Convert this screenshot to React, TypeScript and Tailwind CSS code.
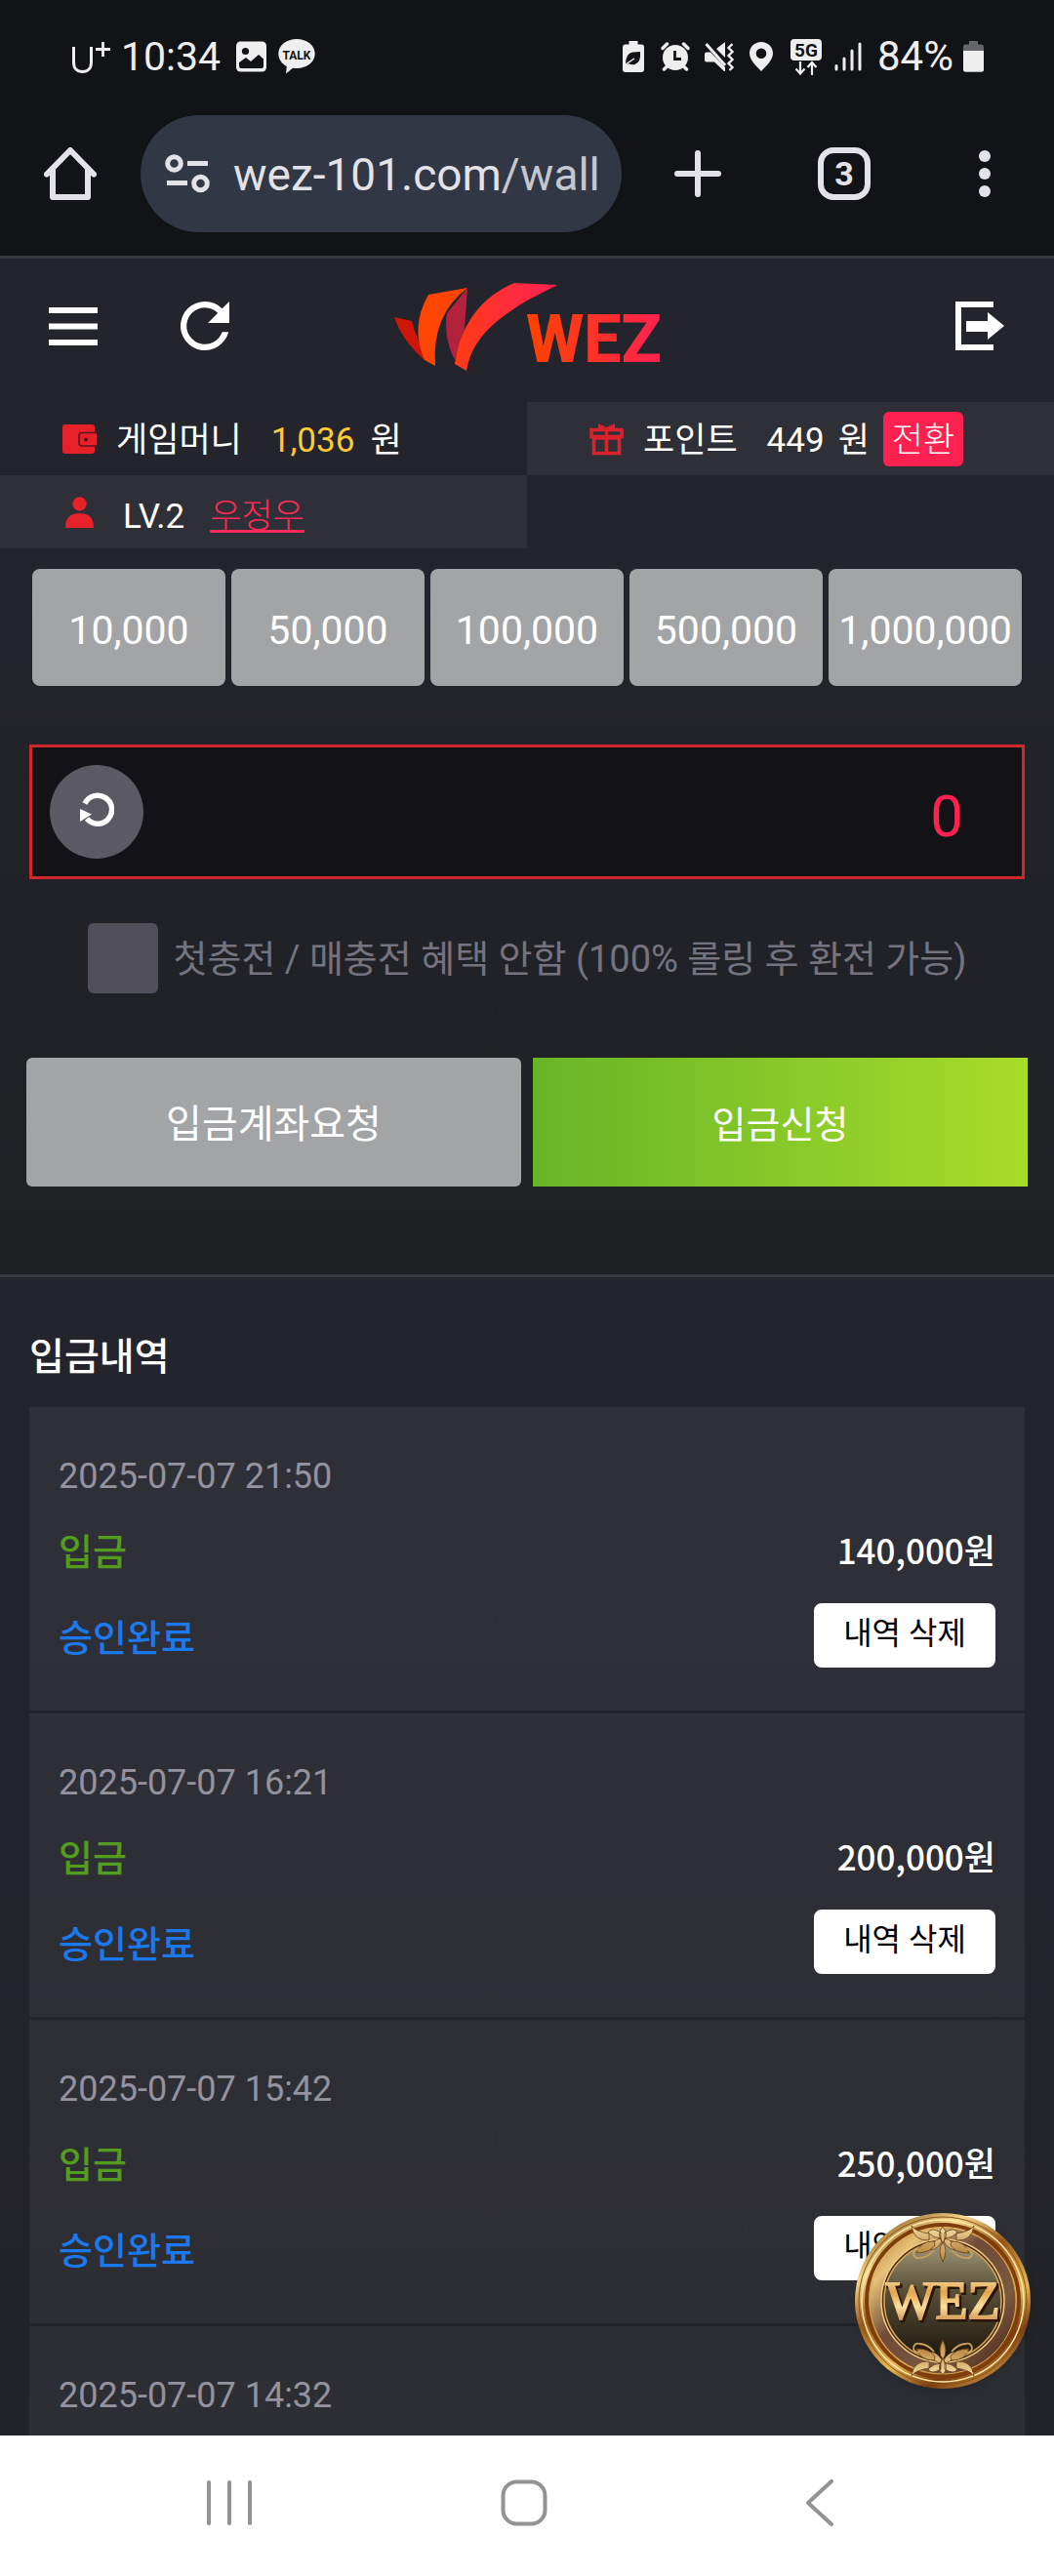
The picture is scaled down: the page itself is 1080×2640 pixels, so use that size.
import { useState } from "react";
import type { ReactNode } from "react";

const PRESETS = [10000, 50000, 100000, 500000, 1000000];

interface Deposit {
  date: string;
  amount?: number;
}

const DEPOSITS: Deposit[] = [
  { date: "2025-07-07 21:50", amount: 140000 },
  { date: "2025-07-07 16:21", amount: 200000 },
  { date: "2025-07-07 15:42", amount: 250000 },
  { date: "2025-07-07 14:32" },
];

const won = (n: number) => n.toLocaleString("en-US");

function StatusBar() {
  return (
    <div className="flex items-center justify-between pt-[38px] pl-[74px] pr-[72px] text-[#eeeeee]">
      <div className="flex h-10 items-center">
        <svg className="h-[34px] w-10" viewBox="0 0 40 34" fill="none" stroke="currentColor">
          <path d="M1.5 7v16c0 6 3.500 9.500 9 9.500s9-3.500 9-9.500V7" strokeWidth="3" />
          <path d="M24 9.500h15M31.500 2v15" strokeWidth="2.800" />
        </svg>
        <span className="ml-2.5 text-[41px] leading-10">10:34</span>
        <svg className="ml-4 h-8 w-[31px]" viewBox="0 0 31 32">
          <rect width="31" height="31" y=".5" rx="4.500" fill="currentColor" />
          <circle cx="9.500" cy="10.500" r="3.600" fill="#121317" />
          <path d="M3 22l7-5 5 4 8-7 5 4.500V26q0 2-2 2H5q-2 0-2-2z" fill="#121317" />
        </svg>
        <svg className="ml-3 h-9 w-[38px]" viewBox="0 0 38 36">
          <path d="M19 0c10.500 0 18.700 6.600 18.700 15S29.500 30 19 30c-1.300 0-2.700-.1-4-.3L8 35.500l.8-7.500C3.500 25.300.3 20.500.3 15 .3 6.600 8.500 0 19 0z" fill="currentColor" />
          <text x="19" y="20.500" textAnchor="middle" className="text-[12px] font-bold" fill="#121317">TALK</text>
        </svg>
      </div>
      <div className="flex h-10 items-center">
        <svg className="h-8 w-[22px]" viewBox="0 0 22 32">
          <path d="M6.500 0h9v3.500H19q3 0 3 3V29q0 3-3 3H3q-3 0-3-3V6.500q0-3 3-3h3.500z" fill="currentColor" />
          <path d="M3 24q0-11 7-12.500l8-.5q1 11-5.500 13-3 .8-6-.8z" fill="#121317" />
          <path d="M3 24l9-6" stroke="#eeeeee" strokeWidth="1.500" />
        </svg>
        <svg className="ml-[17px] h-[30px] w-[30px]" viewBox="0 0 30 30">
          <circle cx="15" cy="16" r="13" fill="currentColor" />
          <path d="M2 6.500L6.500 2M28 6.500L23.500 2M3.500 28l3-3M26.500 28l-3-3" stroke="currentColor" strokeWidth="3.500" strokeLinecap="round" />
          <path d="M14.500 9v8.500h6.500" fill="none" stroke="#121317" strokeWidth="2.800" />
        </svg>
        <svg className="ml-[15px] h-[30px] w-[30px]" viewBox="0 0 30 30">
          <path d="M0 12.500q0-2 2-2h4L21 26v4h-1L10 20.500H2q-2 0-2-2zM12 7l9-7v16z" fill="currentColor" />
          <path d="M1.500 2L21 24" stroke="currentColor" strokeWidth="3" />
          <path d="M28.500 2l-4 4 4 4-4 4 4 4-4 4 4 4-3 3" fill="none" stroke="currentColor" strokeWidth="2.400" />
        </svg>
        <svg className="ml-4 h-[30px] w-6" viewBox="0 0 24 30">
          <path fillRule="evenodd" d="M12 0c6.700 0 12 5 12 11.500C24 19 16 25.500 12 30 8 25.500 0 19 0 11.500 0 5 5.300 0 12 0zm0 6.500a5.300 5.300 0 100 10.600 5.300 5.300 0 000-10.600z" fill="currentColor" />
        </svg>
        <svg className="ml-[18px] h-[37px] w-8" viewBox="0 0 32 37">
          <rect width="32" height="22" rx="4" fill="currentColor" />
          <text x="16" y="17.500" textAnchor="middle" className="text-[19px] font-bold" fill="#121317">5G</text>
          <path d="M10 23v12M5.500 30.500L10 35.500l4.500-5M22 37V24.500M17.500 29l4.500-5 4.500 5" fill="none" stroke="currentColor" strokeWidth="2.200" />
        </svg>
        <svg className="ml-[13px] h-[30px] w-7" viewBox="0 0 28 30" fill="none" stroke="currentColor" strokeWidth="3" strokeLinecap="round">
          <path d="M2 24.500v3.500M10 17v11M18 9v19M26 2v26" />
        </svg>
        <span className="ml-4 text-[42px] leading-10">84%</span>
        <svg className="ml-2.5 h-8 w-[21px]" viewBox="0 0 21 32">
          <path d="M6 0h9v3.500h3q3 0 3 3V29q0 3-3 3H3q-3 0-3-3V6.500q0-3 3-3h3z" fill="#66676a" />
          <path d="M0 10h21v19q0 2.500-2.500 2.500h-16Q0 31.500 0 29z" fill="currentColor" />
        </svg>
      </div>
    </div>
  );
}

function BrowserBar() {
  return (
    <div className="flex items-center pt-10 pr-[65px] pb-6 pl-[45px] text-[#e3e2e8]">
      <button type="button" aria-label="홈">
        <svg className="h-[54px] w-[54px]" viewBox="0 0 54 54" fill="none" stroke="currentColor" strokeWidth="6" strokeLinecap="round" strokeLinejoin="round">
          <path d="M3 27.500L27 3l24 24.500M9 23v28h36V23" />
        </svg>
      </button>
      <div className="ml-[45px] flex h-[120px] min-w-0 flex-1 items-center rounded-full bg-[#313744] pr-6 pl-[25px]">
        <svg className="h-10 w-[46px] shrink-0" viewBox="0 0 46 40" fill="none" stroke="currentColor" strokeWidth="5">
          <circle cx="9.500" cy="9.500" r="6.800" />
          <path d="M23 9.500h21M2 29.500h21" />
          <circle cx="36.500" cy="30" r="6.800" />
        </svg>
        <span className="ml-6 min-w-0 flex-1 overflow-hidden pt-0.5 text-[46px] leading-[60px] whitespace-nowrap">
          wez-101.com<span className="text-[#c4c6d0]">/wall</span>
        </span>
      </div>
      <button type="button" aria-label="새 탭" className="ml-[54px]">
        <svg className="h-12 w-12" viewBox="0 0 48 48" fill="none" stroke="currentColor" strokeWidth="6" strokeLinecap="round">
          <path d="M24 3v42M3 24h42" />
        </svg>
      </button>
      <button
        type="button"
        aria-label="탭 3개"
        className="ml-[99px] flex size-[54px] items-center justify-center rounded-2xl border-6 border-current text-[34px] leading-10 font-bold"
      >
        3
      </button>
      <button type="button" aria-label="메뉴" className="ml-[111px]">
        <svg className="h-12 w-3" viewBox="0 0 12 48" fill="currentColor">
          <circle cx="6" cy="6" r="6" />
          <circle cx="6" cy="24" r="6" />
          <circle cx="6" cy="42" r="6" />
        </svg>
      </button>
    </div>
  );
}

function Logo() {
  return (
    <svg className="h-[94px] w-[280px] overflow-visible" viewBox="0 0 280 94" role="img" aria-label="WEZ">
      <defs>
        <linearGradient id="swoosh" x1="0" x2="1">
          <stop offset="0" stopColor="#ff3b14" />
          <stop offset=".6" stopColor="#ff2a40" />
          <stop offset="1" stopColor="#ff2250" />
        </linearGradient>
        <linearGradient id="word" x1="0" x2="1">
          <stop offset="0" stopColor="#ff4200" />
          <stop offset="1" stopColor="#ff2250" />
        </linearGradient>
      </defs>
      <path d="M4 38l18 4q2 10 7 20l6 20Q12 62 4 38z" fill="#cf1508" />
      <path d="M79 8l-3 42-10 32Q54 58 58 34z" fill="#b3213c" />
      <path d="M39 15l40-7Q42 36 46 88l-11-6Q20 48 39 15z" fill="#ff4503" />
      <path d="M66 86l12 7c5-30 25-50 62-72l31-16-44-2C92 18 72 46 66 86z" fill="url(#swoosh)" />
      <text x="139" y="84" className="text-[68px] font-extrabold" fill="url(#word)">WEZ</text>
    </svg>
  );
}

function SiteHeader() {
  return (
    <header className="grid grid-cols-[1fr_auto_1fr] items-center pt-[22px] pr-[51px] pb-[31px] pl-[50px] text-white">
      <div className="flex items-center gap-[85px]">
        <button type="button" aria-label="메뉴 열기">
          <svg className="h-[39px] w-[50px]" viewBox="0 0 50 39" fill="currentColor">
            <path d="M0 0h50v6H0zM0 16.500h50v6H0zM0 33h50v6H0z" />
          </svg>
        </button>
        <button type="button" aria-label="새로고침">
          <svg className="size-[50px]" viewBox="4 4 16 16" fill="currentColor">
            <path d="M17.650 6.350A7.960 7.960 0 0012 4a8 8 0 107.730 10h-2.080A6 6 0 1112 6c1.660 0 3.140.69 4.220 1.780L13 11h7V4z" />
          </svg>
        </button>
      </div>
      <Logo />
      <button type="button" aria-label="로그아웃" className="justify-self-end">
        <svg className="size-[50px]" viewBox="0 0 50 50" fill="currentColor">
          <path d="M0 0h39v6H6v38h33v6H0zM11 20h22v-9l17 14-17 14v-8H11z" />
        </svg>
      </button>
    </header>
  );
}

function AccountInfo() {
  return (
    <div className="grid grid-cols-2 text-[35px] leading-[50px] text-white">
      <div className="flex h-[75px] items-center pl-16">
        <svg className="h-[30px] w-[35px]" viewBox="0 0 35 30">
          <path d="M3 0h27q3 0 3 3v24q0 3-3 3H3q-3 0-3-3V3q0-3 3-3z" fill="#e62129" />
          <path d="M35 8.500H20q-3 0-3 3v7.500q0 3 3 3h15" fill="#e62129" stroke="#5a161c" strokeWidth="1.600" />
          <circle cx="24" cy="15.500" r="2" fill="#4a1014" />
        </svg>
        <span className="ml-5 pt-1">게임머니</span>
        <span className="ml-[30px] pt-1 text-[#ffc933]">1,036</span>
        <span className="ml-4 pt-1">원</span>
      </div>
      <div className="flex h-[75px] items-center bg-[#2f2f37] pl-16">
        <svg className="h-[34px] w-[35px]" viewBox="0 0 35 34" fill="none" stroke="#d9222b" strokeWidth="3.600">
          <path d="M2 7.500h31v7H2zM4.500 14.500v17h26v-17M17.500 7.500v24M3 16h29" />
          <path d="M9 6V1l8.500 4L26 1v5z" fill="#d9222b" stroke="none" />
        </svg>
        <span className="ml-5 pt-1">포인트</span>
        <span className="ml-[30px] pt-1">449</span>
        <span className="ml-3.5 pt-1">원</span>
        <button type="button" className="ml-3.5 h-14 rounded-md bg-[#ff2250] px-[9px] pt-1 font-light">
          전환
        </button>
      </div>
      <div className="flex h-[75px] items-center bg-[#2f2f37] pl-[67px]">
        <svg className="h-8 w-[29px]" viewBox="0 0 29 32" fill="#e62129">
          <circle cx="14.500" cy="7.500" r="7.200" />
          <path d="M0 32q0-15 14.500-15T29 32z" />
        </svg>
        <span className="ml-[30px] pt-2.5">LV.2</span>
        <a href="#profile" className="ml-[26px] pt-2.5 font-light text-[#ff2a5a] underline decoration-3">
          우정우
        </a>
      </div>
    </div>
  );
}

function DepositForm() {
  const [amount, setAmount] = useState(0);
  const [noBonus, setNoBonus] = useState(false);

  return (
    <form
      onSubmit={(e) => e.preventDefault()}
      className="border-b-3 border-[#38383d] bg-linear-to-b from-[#24242d] via-[#222328] via-30% to-[#1f2024] pt-[21px] pb-[90px]"
    >
      <div className="mx-[33px] grid grid-cols-5 gap-1.5">
        {PRESETS.map((value) => (
          <button
            key={value}
            type="button"
            onClick={() => setAmount(amount + value)}
            className="h-[120px] rounded-lg bg-[#a3a4a6] pt-1.5 text-[41px] leading-[50px] text-white"
          >
            {won(value)}
          </button>
        ))}
      </div>

      <div className="mx-[30px] mt-[60px] flex h-[138px] items-center border-3 border-[#d2262f] bg-[#131217] pr-[60px] pl-[18px]">
        <button
          type="button"
          aria-label="금액 초기화"
          onClick={() => setAmount(0)}
          className="flex size-24 shrink-0 items-center justify-center rounded-full bg-[#5b5963] pb-1.5"
        >
          <svg className="size-9" viewBox="0 0 36 36" fill="none" stroke="#ffffff" strokeWidth="5.500">
            <path d="M6 12.500A14.500 14.500 0 1 1 8 28" />
            <path d="M1 18l12 5.500L1 31z" fill="#ffffff" stroke="none" />
          </svg>
        </button>
        <input
          type="text"
          inputMode="numeric"
          aria-label="입금 금액"
          value={won(amount)}
          onChange={(e) => setAmount(Number(e.target.value.replace(/\D/g, "")))}
          className="h-20 min-w-0 flex-1 bg-transparent pt-2 text-right text-[60px] leading-[72px] text-[#ff2250] outline-none"
        />
      </div>

      <div className="mt-[45px] flex items-center justify-center">
        <input
          id="no-bonus"
          type="checkbox"
          checked={noBonus}
          onChange={(e) => setNoBonus(e.target.checked)}
          className="size-[72px] appearance-none rounded-md bg-[#504f59] checked:bg-[#d2262f]"
        />
        <label htmlFor="no-bonus" className="ml-4 pt-0.5 text-[38px] leading-[54px] text-[#757380]">
          첫충전 / 매충전 혜택 안함 (100% 롤링 후 환전 가능)
        </label>
      </div>

      <div className="mx-[27px] mt-[66px] grid grid-cols-2 gap-3 text-white">
        <button type="button" className="h-[132px] rounded-md bg-[#a3a4a6] pt-1.5 text-[40px]">
          입금계좌요청
        </button>
        <button type="submit" className="h-[132px] bg-linear-to-r from-[#66b528] to-[#a8dc2a] pt-1.5 text-[38px]">
          입금신청
        </button>
      </div>
    </form>
  );
}

function DepositItem({ date, amount }: Deposit) {
  return (
    <li className="bg-white/5 px-[30px] pt-11 pb-11">
      <p className="text-[36px] leading-[54px] text-[#93929e]">{date}</p>
      {amount !== undefined && (
        <>
          <div className="mt-6 flex items-center justify-between leading-[54px] font-medium">
            <span className="text-[38px] text-[#549c1e]">입금</span>
            <span className="pb-1.5 font-['Noto_Sans_CJK_KR',sans-serif] text-[35px] leading-[48px] text-white">
              {won(amount)}원
            </span>
          </div>
          <div className="mt-[25px] flex items-center justify-between">
            <span className="pt-1.5 text-[38px] leading-[54px] font-medium text-[#1c79ec]">승인완료</span>
            <button type="button" className="h-[66px] w-[186px] rounded-lg bg-white pb-1 text-[32px] leading-[48px] text-black">
              내역 삭제
            </button>
          </div>
        </>
      )}
    </li>
  );
}

function Leaf({ transform }: { transform: string }) {
  return (
    <g transform={transform}>
      <path d="M0 2q7 8 0 17q-7-9 0-17zM-2 8q-10-6-13 0q6 6 13 6zM2 8q10-6 13 0q-6 6-13 6zM-2 14q-10 2-10 12q8-2 11-9zM2 14q10 2 10 12q-8-2-11-9zM0 18q6 8 0 20q-6-12 0-20z" fill="url(#leaf)" stroke="#5a3510" strokeWidth=".7" />
      <path d="M-14 9q-14-2-18-8 2 16 18 15zM14 9q14-2 18-8-2 16-18 15zM-9 17q-14 0-18 12 14 0 19-8zM9 17q14 0 18 12-14 0-19-8z" fill="url(#leaf)" stroke="#5a3510" strokeWidth=".7" />
      <path d="M-9 26q-7 8-15 8a4.500 4.500 0 1 1 1-8M9 26q7 8 15 8a4.500 4.500 0 1 0-1-8" fill="none" stroke="#c9a05c" strokeWidth="1.800" />
    </g>
  );
}

function Seal() {
  return (
    <svg className="size-[180px]" viewBox="0 0 180 180">
      <defs>
        <linearGradient id="rim" x1=".2" y1="0" x2=".8" y2="1">
          <stop offset="0" stopColor="#8a5a1c" />
          <stop offset=".2" stopColor="#f5d88a" />
          <stop offset=".4" stopColor="#9a5a18" />
          <stop offset=".65" stopColor="#e8b855" />
          <stop offset=".82" stopColor="#7a3c0e" />
          <stop offset="1" stopColor="#d9a245" />
        </linearGradient>
        <linearGradient id="band" x1="0" y1="0" x2="1" y2="1">
          <stop offset="0" stopColor="#b0702a" />
          <stop offset=".2" stopColor="#e6c178" />
          <stop offset=".42" stopColor="#6e4a38" />
          <stop offset=".7" stopColor="#7c5840" />
          <stop offset="1" stopColor="#3e1c10" />
        </linearGradient>
        <linearGradient id="face" x1="0" y1="0" x2="0" y2="1">
          <stop offset="0" stopColor="#a39b7c" />
          <stop offset=".4" stopColor="#5a5038" />
          <stop offset="1" stopColor="#1d160c" />
        </linearGradient>
        <linearGradient id="gold" x1="0" y1="0" x2="0" y2="1">
          <stop offset="0" stopColor="#fff0c4" />
          <stop offset=".35" stopColor="#e3a54a" />
          <stop offset=".6" stopColor="#fbdf9c" />
          <stop offset="1" stopColor="#b8681c" />
        </linearGradient>
        <linearGradient id="leaf" x1="0" y1="0" x2="0" y2="1">
          <stop offset="0" stopColor="#f6dca0" />
          <stop offset="1" stopColor="#b98440" />
        </linearGradient>
      </defs>
      <circle cx="90" cy="90" r="90" fill="url(#rim)" />
      <circle cx="90" cy="90" r="86" fill="none" stroke="#8a5418" />
      <circle cx="90" cy="90" r="83" fill="none" stroke="#ffe9a8" strokeWidth="1.500" />
      <circle cx="90" cy="90" r="78" fill="none" stroke="#7d3d0c" strokeWidth="4" />
      <circle cx="90" cy="90" r="75" fill="url(#band)" stroke="#e0a850" />
      <circle cx="90" cy="90" r="63" fill="#4a2c18" stroke="#f0cb80" strokeWidth="1.500" />
      <circle cx="90" cy="90" r="60" fill="url(#face)" stroke="#d9a858" strokeWidth="1.500" />
      <Leaf transform="translate(90 12)" />
      <Leaf transform="translate(90 168) scale(1 -1)" />
      <text x="92" y="110" textAnchor="middle" className="font-['Liberation_Serif',serif] text-[54px]" fill="#2a1406" stroke="#2a1406" strokeWidth="3">WEZ</text>
      <text x="90" y="108" textAnchor="middle" className="font-['Liberation_Serif',serif] text-[54px]" fill="url(#gold)" stroke="url(#gold)" strokeWidth="2">WEZ</text>
    </svg>
  );
}

function NavButton({ label, children }: { label: string; children: ReactNode }) {
  return (
    <button type="button" aria-label={label} className="flex justify-center">
      <svg className="size-12" viewBox="0 0 48 48" fill="none" stroke="#939393" strokeWidth="4" strokeLinecap="round" strokeLinejoin="round">
        {children}
      </svg>
    </button>
  );
}

export default function App() {
  return (
    <div className="flex h-screen flex-col overflow-hidden bg-[#24242c] font-[Roboto,'Noto_Sans_CJK_KR',sans-serif]">
      <div className="border-b-3 border-[#38383a] bg-[#121317]">
        <StatusBar />
        <BrowserBar />
      </div>

      <div className="relative flex min-h-0 flex-1 flex-col">
        <main className="min-h-0 flex-1 overflow-y-auto [scrollbar-width:none]">
          <SiteHeader />
          <AccountInfo />
          <DepositForm />
          <section className="bg-linear-to-b from-[#24242d] to-[#222328] px-[30px] pt-[52px]">
            <h2 className="text-[39px] leading-[60px] font-medium text-white">입금내역</h2>
            <ul className="mt-[21px] flex flex-col gap-[3px]">
              {DEPOSITS.map((d) => (
                <DepositItem key={d.date} {...d} />
              ))}
            </ul>
          </section>
        </main>
        {/* floating shortcut over the history list */}
        <button type="button" aria-label="WEZ" className="absolute right-6 bottom-12 rounded-full shadow-lg">
          <Seal />
        </button>
      </div>

      <nav className="grid h-36 grid-cols-3 items-center bg-white pr-[90px] pb-1.5 pl-[84px]">
        <NavButton label="최근 앱">
          <path d="M3 3v42M24 3v42M45 3v42" />
        </NavButton>
        <NavButton label="홈 화면">
          <rect x="2.500" y="2.500" width="43" height="43" rx="14" />
        </NavButton>
        <NavButton label="뒤로">
          <path d="M37 2L13 24l24 22" />
        </NavButton>
      </nav>
    </div>
  );
}
